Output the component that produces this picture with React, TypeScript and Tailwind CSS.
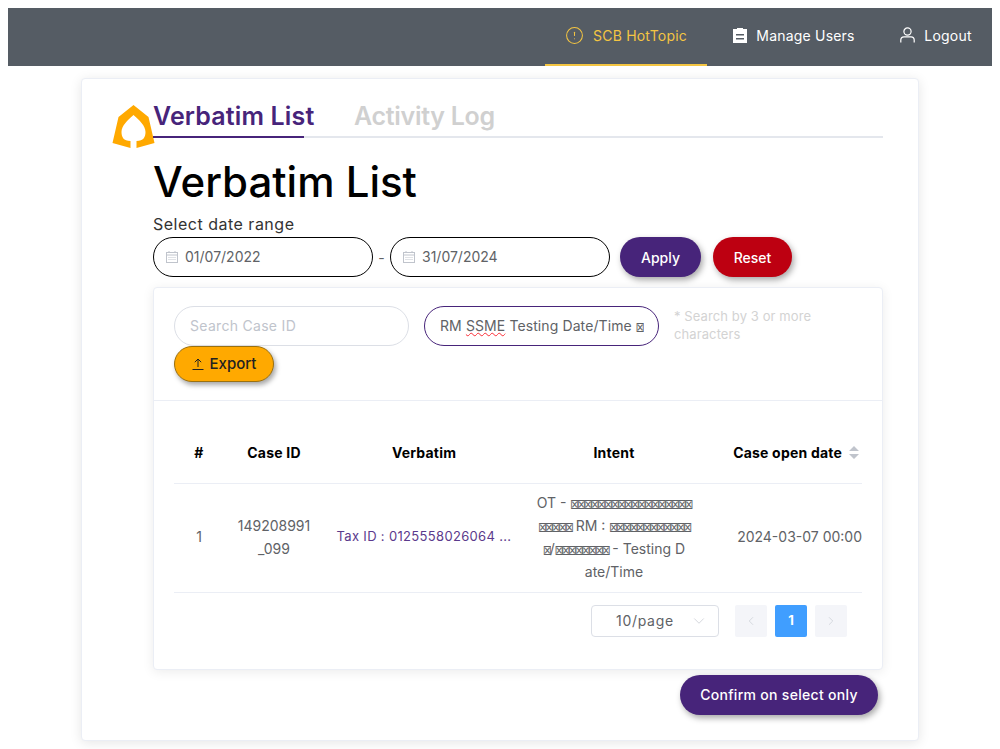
import { ChevronDown, ChevronLeft, ChevronRight, CircleAlert } from "lucide-react";

const FONT = "font-['Inter','Liberation_Sans',sans-serif]";

// the reference shows missing-glyph boxes where the Thai text should be
function Tofu({ n }: { n: number }) {
  return (
    <span className="inline-block scale-y-[1.3] font-['DejaVu_Sans'] text-[11px] leading-none tracking-[-2.5px] text-[#606266]">
      {"⊠".repeat(n)}
    </span>
  );
}

function BellLogo() {
  return (
    <svg className="absolute left-[30px] top-[26px] h-[43px] w-[43px]" viewBox="0 0 42 43" fill="#ffa900">
      <path d="M21 0 L36 12 L42 38 L24 43 V36 C31 36 33 32 33 27 C33 21 27 15 21 10 C15 15 9 21 9 27 C9 32 11 36 18 36 V43 L0 38 L6 12 Z" />
    </svg>
  );
}

function CalendarIcon() {
  return (
    <svg className="h-3 w-3 shrink-0" viewBox="0 0 12 12" fill="none" stroke="#c0c4cc" strokeWidth="1">
      <rect x="0.5" y="1.5" width="11" height="10" />
      <path d="M0.5 4h11M3 0v2M9 0v2" />
      <path d="M2.5 6.5h7M2.5 8.5h7" strokeDasharray="1 1" />
    </svg>
  );
}

function ClipboardIcon() {
  return (
    <svg className="h-4 w-[14px]" viewBox="0 0 14 16" fill="#fff">
      <path d="M0 2h4V1h6v1h4v14H0z" />
      <path d="M3 7h8v1.5H3zM3 11h8v1.5H3z" fill="#555c64" />
    </svg>
  );
}

function UserIcon() {
  return (
    <svg className="h-[16px] w-[15px]" viewBox="0 0 15 16" fill="none" stroke="#fff" strokeWidth="1.2">
      <circle cx="7.5" cy="4.5" r="3.6" />
      <path d="M0.8 15.5v-2.5c0-2 1.5-3.2 3.2-3.2h7c1.7 0 3.2 1.2 3.2 3.2v2.5" />
    </svg>
  );
}

function NavItem({ icon, label, active, className }: { icon: React.ReactNode; label: string; active?: boolean; className: string }) {
  return (
    <div className={`flex h-full items-center justify-center gap-[9px] border-b-2 pb-[2px] text-[14px] tracking-[0.2px] ${active ? "border-[#f4c542] text-[#f4c542]" : "border-transparent text-white"} ${className}`}>
      {icon}
      <span>{label}</span>
    </div>
  );
}

function DateBox({ value }: { value: string }) {
  return (
    <div className="flex h-10 w-[220px] items-center gap-[7px] rounded-[20px] border border-black bg-white pb-[1px] pl-[12px] text-[14px] text-[#606266]">
      <CalendarIcon />
      <span>{value}</span>
    </div>
  );
}

function PageBtn({ children, active }: { children: React.ReactNode; active?: boolean }) {
  return (
    <div className={`flex h-8 w-8 items-center justify-center rounded-[2px] text-[13px] font-bold ${active ? "bg-[#409eff] text-white" : "bg-[#f4f5f9] text-[#c0c4cc]"}`}>
      {children}
    </div>
  );
}

export default function App() {
  return (
    <div className={`${FONT} h-[749px] overflow-hidden bg-white pt-2`}>
      <header className="mx-2 flex h-[58px] justify-end bg-[#555c64]">
        <NavItem className="w-[162px]" active icon={<CircleAlert size={19} strokeWidth={1.3} />} label="SCB HotTopic" />
        <NavItem className="ml-[24px] w-[126px]" icon={<ClipboardIcon />} label="Manage Users" />
        <NavItem className="ml-[43px] mr-5 w-[72px]" icon={<UserIcon />} label="Logout" />
      </header>

      <main className="relative mx-auto mt-3 h-[663px] w-[838px] rounded border border-[#ebeef5] bg-white pl-[71px] pr-[35px] pt-[20px] shadow-[0_2px_12px_rgba(0,0,0,0.1)]">
        <BellLogo />

        <div className="flex h-[39px] gap-[40px] border-b-2 border-[#e4e7ed] text-[25px] font-semibold leading-[34px]">
          <div className="relative w-[161px] whitespace-nowrap tracking-[0.15px] text-[#47247a]">
            Verbatim List
            <div className="absolute bottom-[-2px] left-0 h-[2px] w-[151px] bg-[#47247a]" />
          </div>
          <div className="whitespace-nowrap tracking-[-0.3px] text-[#d0d0d0]">Activity Log</div>
        </div>

        <h1 className="mt-[19px] text-[42px] font-medium leading-[50px] text-black">Verbatim List</h1>

        <div className="mt-[5px] text-[16px] leading-[25px] tracking-[0.5px] text-[#333]">Select date range</div>

        <div className="flex items-center">
          <DateBox value="01/07/2022" />
          <span className="w-[17px] text-center text-[14px] text-[#606266]">-</span>
          <DateBox value="31/07/2024" />
          <div className="ml-[10px] flex h-10 w-[81px] items-center justify-center rounded-[20px] bg-[#47247a] text-[14px] font-medium text-white shadow-[2px_3px_6px_rgba(0,0,0,0.35)]">Apply</div>
          <div className="ml-3 flex h-10 w-[79px] items-center justify-center rounded-[20px] bg-[#bd0011] text-[14px] font-medium text-white shadow-[2px_3px_6px_rgba(0,0,0,0.35)]">Reset</div>
        </div>

        <section className="mt-[10px] h-[383px] rounded border border-[#ebeef5] bg-white shadow-[0_2px_12px_rgba(0,0,0,0.08)]">
          <div className="h-[113px] border-b border-[#ebeef5] px-5 pt-[18px]">
            <div className="flex">
              <div className="flex h-10 w-[235px] items-center rounded-[20px] border border-[#dcdfe6] pb-[1px] pl-[15px] text-[14px] tracking-[0.3px] text-[#c0c4cc]">Search Case ID</div>
              <div className="ml-[15px] flex h-10 w-[235px] items-center overflow-hidden whitespace-nowrap rounded-[20px] border border-[#47247a] pb-[1px] pl-[15px] text-[14px] tracking-[0.1px] text-[#606266]">
                <span>
                  RM <span className="underline decoration-red-500 decoration-wavy decoration-1">SSME</span> Testing Date/Time <Tofu n={1} />
                </span>
              </div>
              <div className="ml-[15px] w-[170px] pt-[1px] text-[13px] leading-[18px] tracking-[0.1px] text-[#d3d3d3]">
                * Search by 3 or more characters
              </div>
            </div>
            <div className="flex h-9 w-[100px] items-center justify-center gap-[6px] rounded-[18px] border border-[#9a7010] bg-[#ffa900] pt-[1px] text-[15px] font-medium text-[#222] shadow-[2px_3px_5px_rgba(0,0,0,0.35)]">
              <svg className="h-[13px] w-3" viewBox="0 0 12 13" fill="none" stroke="#222" strokeWidth="1">
                <path d="M6 9V1M2.8 4.2 6 1l3.2 3.2M0.5 11.5h11" />
              </svg>
              Export
            </div>
          </div>

          <div className="px-5 pt-[21px]">
            <table className="w-[688px] table-fixed border-collapse text-center text-[14px] text-[#606266]">
              <colgroup>
                <col className="w-[50px]" />
                <col className="w-[100px]" />
                <col className="w-[200px]" />
                <col className="w-[180px]" />
                <col className="w-[158px]" />
              </colgroup>
              <thead>
                <tr className="h-[61px] border-b border-[#ebeef5] text-[14px] font-semibold tracking-[0.2px] text-black">
                  <th>#</th>
                  <th>Case ID</th>
                  <th>Verbatim</th>
                  <th>Intent</th>
                  <th>
                    <div className="flex items-center justify-end gap-[7px] whitespace-nowrap pr-[3px]">
                      Case open date
                      <svg className="h-[13px] w-[10px]" viewBox="0 0 10 13" fill="#c0c4cc">
                        <path d="M5 0l5 5H0zM0 8h10l-5 5z" />
                      </svg>
                    </div>
                  </th>
                </tr>
              </thead>
              <tbody>
                <tr className="h-[109px] border-b border-[#ebeef5] leading-[23px]">
                  <td className="pb-[2px]">1</td>
                  <td className="pb-[2px]">149208991<br />_099</td>
                  <td className="whitespace-nowrap pb-[2px] text-[13px] tracking-[0.33px] text-[#5b3a8c]">Tax ID : 0125558026064 ...</td>
                  <td className="whitespace-nowrap pb-[2px]">
                    OT - <Tofu n={18} /><br />
                    <Tofu n={5} /> RM : <Tofu n={12} /><br />
                    <Tofu n={1} />/<Tofu n={8} /> - Testing D<br />
                    ate/Time
                  </td>
                  <td className="whitespace-nowrap pb-[2px] text-right">2024-03-07 00:00</td>
                </tr>
              </tbody>
            </table>

            <div className="mt-3 flex items-center pl-[417px] pr-[15px]">
              <div className="flex h-8 w-[128px] items-center justify-between rounded border border-[#dcdfe6] pl-[24px] pr-[10px] text-[14px] tracking-[0.7px] text-[#606266]">
                10/page
                <ChevronDown size={18} strokeWidth={0.9} color="#c0c4cc" />
              </div>
              <div className="ml-4 flex gap-2">
                <PageBtn><ChevronLeft size={14} strokeWidth={1} /></PageBtn>
                <PageBtn active>1</PageBtn>
                <PageBtn><ChevronRight size={14} strokeWidth={1} /></PageBtn>
              </div>
            </div>
          </div>
        </section>

        <div className="mt-[5px] flex justify-end pr-[5px]">
          <div className="flex h-10 w-[198px] items-center justify-center rounded-[20px] bg-[#47247a] pb-[1px] text-[14px] font-medium tracking-[0.3px] text-white shadow-[2px_3px_6px_rgba(0,0,0,0.35)]">
            Confirm on select only
          </div>
        </div>
      </main>
    </div>
  );
}
